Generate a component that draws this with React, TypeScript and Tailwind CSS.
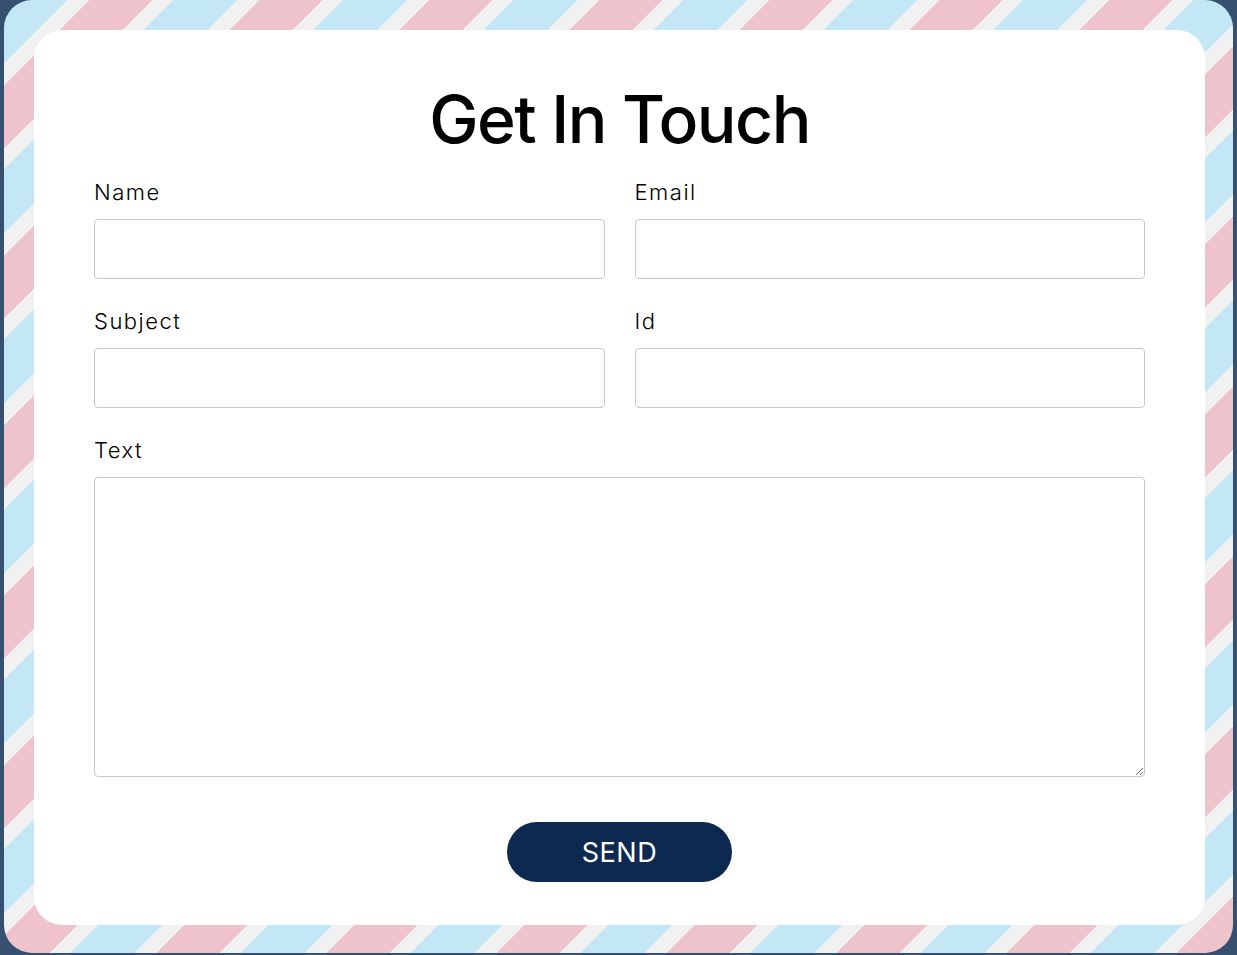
import React from "react";

const fields = [
  [{ label: "Name", type: "text" }, { label: "Email", type: "email" }],
  [{ label: "Subject", type: "text" }, { label: "Id", type: "text" }],
];

// diagonal airmail stripes: blue / white / pink / white
const stripes =
  "repeating-linear-gradient(135deg, #c3e7f5 0px, #c3e7f5 45px, #f1f1f1 45px, #f1f1f1 60.8px, #efc3cc 60.8px, #efc3cc 105.3px, #f1f1f1 105.3px, #f1f1f1 120.2px)";

const ContactPage: React.FC = () => {
  return (
    <div className="w-full h-[955px] bg-[#36516f] pl-[4px] pr-[4px] pb-[2px] font-['Inter','Noto_Sans',sans-serif] text-black">
      <div
        className="w-full h-full rounded-[28px] pt-[30px] pl-[30px] pr-[28px] pb-[28px]"
        style={{ backgroundImage: stripes }}
      >
        <div className="w-full h-full bg-white rounded-[28px] px-[60px] flex flex-col">
          <h1 className="text-center text-[66px] leading-none font-medium mt-[56px] mb-[25px] tracking-[-1.5px]">
            Get In Touch
          </h1>

          {fields.map((row, idx) => (
            <div key={idx} className="grid grid-cols-2 gap-[30px] mb-[27px]">
              {row.map((f) => (
                <div key={f.label} className="flex flex-col">
                  <label className="text-[22px] leading-[30px] mb-[12px] tracking-[1.5px] font-light">
                    {f.label}
                  </label>
                  <input
                    type={f.type}
                    className="h-[60px] border border-[#c8c8c8] rounded-[4px] px-3 outline-none"
                  />
                </div>
              ))}
            </div>
          ))}

          <div className="flex flex-col">
            <label className="text-[22px] leading-[30px] mb-[12px] tracking-[1.5px] font-light">Text</label>
            <textarea className="h-[300px] border border-[#c8c8c8] rounded-[4px] px-3 py-2 outline-none" />
          </div>

          <div className="flex justify-center mt-[45px]">
            <button className="w-[225px] h-[60px] rounded-full bg-[#0c2952] text-white text-[27px] leading-none tracking-[0.5px]">
              SEND
            </button>
          </div>
        </div>
      </div>
    </div>
  );
};

export default ContactPage;
